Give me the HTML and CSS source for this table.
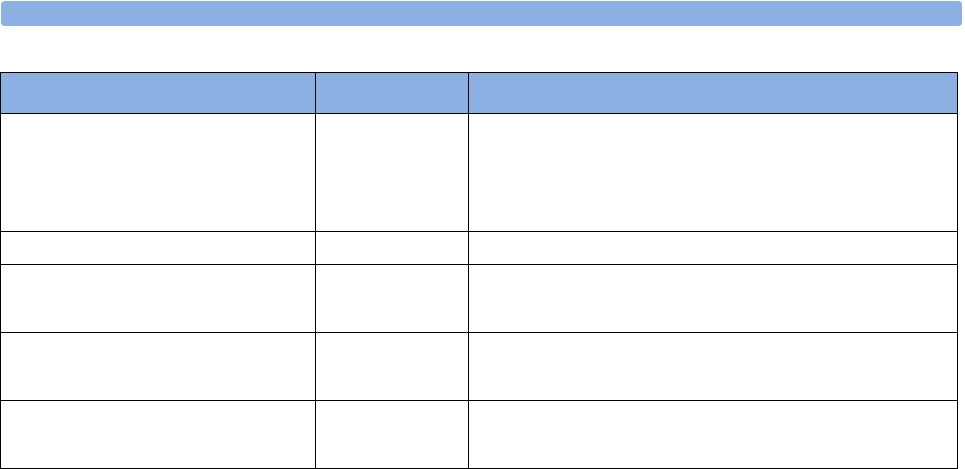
FILE: index.html
```html
<!DOCTYPE html>
<html lang="en">
<head>
<meta charset="utf-8">
<title>Table</title>
<link rel="stylesheet" href="styles.css">
</head>
<body>
<div class="page">
  <div class="title-bar"></div>
  <div class="grid-table">
    <div class="cell head"></div><div class="cell head"></div><div class="cell head"></div>
    <div class="cell r1"></div><div class="cell r1"></div><div class="cell r1"></div>
    <div class="cell r2"></div><div class="cell r2"></div><div class="cell r2"></div>
    <div class="cell r3"></div><div class="cell r3"></div><div class="cell r3"></div>
    <div class="cell r3"></div><div class="cell r3"></div><div class="cell r3"></div>
    <div class="cell r3"></div><div class="cell r3"></div><div class="cell r3"></div>
  </div>
</div>
</body>
</html>
```

FILE: styles.css
```css
html, body {
  margin: 0;
  padding: 0;
  background: #ffffff;
  font-family: "Liberation Sans", Arial, sans-serif;
}

.page {
  width: 965px;
  height: 469px;
  overflow: hidden;
}

.title-bar {
  margin: 1px 0 0 1px;
  width: 961px;
  height: 25px;
  background: #8db0e2;
  border-radius: 4px;
}

.grid-table {
  margin-top: 46px;
  width: 956px;
  display: grid;
  grid-template-columns: 314px 152px 488px;
  grid-template-rows: 40px 117px 32px 67px 67px 67px;
  gap: 1px;
  padding: 1px;
  background: #000000;
}

.cell {
  background: #ffffff;
}

.cell.head {
  background: #8db0e2;
}
```
